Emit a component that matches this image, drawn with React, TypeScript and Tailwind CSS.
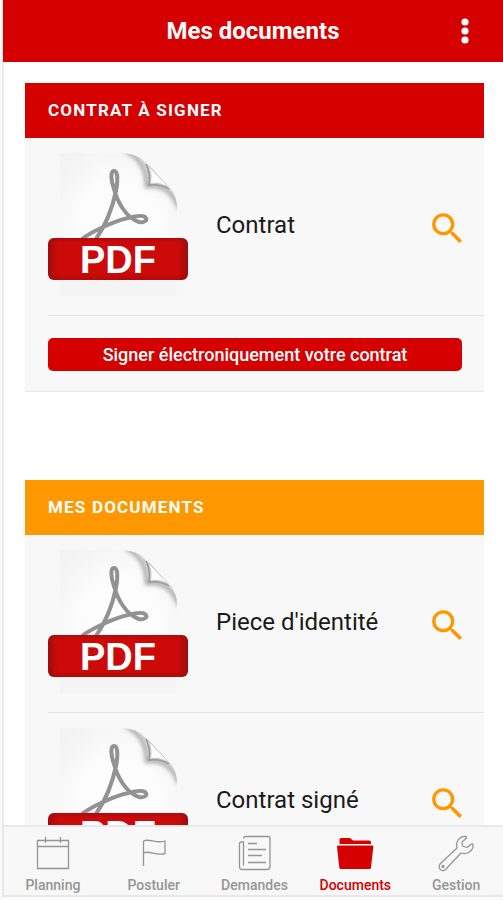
import { useId, type ReactNode } from "react";

function PdfIcon() {
  const id = useId();
  return (
    <svg viewBox="0 0 140 148" className="h-[148px] w-[140px] shrink-0" aria-hidden="true">
      <defs>
        <radialGradient id={`${id}page`} cx="50%" cy="55%" r="65%">
          <stop offset="0" stopColor="#ffffff" />
          <stop offset="0.6" stopColor="#fbfbfb" />
          <stop offset="1" stopColor="#f3f3f3" />
        </radialGradient>
        <linearGradient id={`${id}band`} x1="0" x2="1" y1="0" y2="0">
          <stop offset="0" stopColor="#9c0d0d" />
          <stop offset="0.07" stopColor="#cc0a0a" />
          <stop offset="0.93" stopColor="#cc0a0a" />
          <stop offset="1" stopColor="#9c0d0d" />
        </linearGradient>
        <linearGradient id={`${id}shade`} x1="0" x2="0" y1="0" y2="1">
          <stop offset="0" stopColor="#8a0a0a" stopOpacity="0.4" />
          <stop offset="0.12" stopColor="#8a0a0a" stopOpacity="0" />
          <stop offset="0.85" stopColor="#8a0a0a" stopOpacity="0" />
          <stop offset="1" stopColor="#8a0a0a" stopOpacity="0.4" />
        </linearGradient>
        <filter id={`${id}soft`} x="-30%" y="-30%" width="160%" height="160%">
          <feGaussianBlur stdDeviation="2.2" />
        </filter>
        <clipPath id={`${id}clip`}>
          <path d="M12 3H72C87 3 95 9 102 16L121 36C126 42 129 50 129 57V146H12Z" />
        </clipPath>
      </defs>
      <path
        d="M12 3H72C87 3 95 9 102 16L121 36C126 42 129 50 129 57V146H12Z"
        fill={`url(#${id}page)`}
      />
      <g clipPath={`url(#${id}clip)`}>
        <path
          d="M78 1C93 8 99 20 99 36C115 34 126 43 131 58"
          fill="none"
          stroke="#a0a0a0"
          strokeWidth="4"
          filter={`url(#${id}soft)`}
        />
        <path d="M84 5C96 11 101 22 101 35C113 34 123 38 128 50L119 35L102 16Z" fill="#cccccc" />
        <path d="M101 17C104 23 104 28 103 33C109 32 114 33 119 36Z" fill="#fdfdfd" />
        <path d="M98 14C102 22 102 28 101 35C108 34 115 35 121 39" fill="none" stroke="#999999" strokeWidth="1.5" />
      </g>
      <path
        d="M34 89C43 82 66 71 80 68C87 66 94 65 97 67C101 70 96 73 91 72C78 68 69 51 66 39C63 31 62 21 66 21C70 21 70 31 68 41C64 60 57 76 48 89"
        fill="none"
        stroke="#929292"
        strokeWidth="4"
      />
      <path d="M12 129H129V146H12Z" fill="#f4f4f4" />
      <rect y="88" width="140" height="42" rx="6" fill={`url(#${id}band)`} />
      <rect y="88" width="140" height="42" rx="6" fill={`url(#${id}shade)`} />
      <text x="70" y="123" textAnchor="middle" fill="#ffffff" className="font-['Liberation_Sans',sans-serif] text-[38px] font-bold">
        PDF
      </text>
    </svg>
  );
}

function DocumentRow({ name }: { name: string }) {
  return (
    <li className="ml-[23px] flex h-[178px] items-center border-b border-[#e4e4e4] pr-4">
      <div className="pb-1.5">
        <PdfIcon />
      </div>
      <span className="ml-7 flex-1 pb-1 text-2xl text-[#1a1a1a]">{name}</span>
      <button type="button" aria-label={`Voir ${name}`} className="pt-1 text-[#ff9800]">
        <svg viewBox="0 0 24 24" className="size-[41px]" fill="currentColor" aria-hidden="true">
          <path d="M15.5 14h-.79l-.28-.27A6.471 6.471 0 0 0 16 9.5 6.5 6.5 0 1 0 9.5 16c1.61 0 3.09-.59 4.23-1.57l.27.28v.79l5 4.99L20.49 19l-4.99-5zm-6 0C7.01 14 5 11.99 5 9.5S7.01 5 9.5 5 14 7.01 14 9.5 11.99 14 9.5 14z" />
        </svg>
      </button>
    </li>
  );
}

function NavItem({ label, active = false, children }: { label: string; active?: boolean; children: ReactNode }) {
  return (
    <a
      href="#"
      aria-current={active ? "page" : undefined}
      className={`flex flex-col items-center gap-0.5 pt-2 ${active ? "text-[#d50000]" : "text-[#959595]"}`}
    >
      <svg viewBox="0 0 40 40" className="size-10" fill="none" stroke="currentColor" strokeWidth="1.3" aria-hidden="true">
        {children}
      </svg>
      <span className="text-sm leading-4 font-medium">{label}</span>
    </a>
  );
}

export default function App() {
  return (
    <div className="h-screen bg-[#fafafa] pb-[3px] pl-0.5 font-[Roboto,sans-serif]">
      <div className="flex h-full flex-col bg-white">
        <header className="relative flex h-[62px] shrink-0 items-center justify-center border-l border-[#e8e8e8] bg-[#d50000]">
          <h1 className="text-2xl font-bold text-white">Mes documents</h1>
          <button type="button" aria-label="Menu" className="absolute right-6 flex w-7 justify-center text-white">
            <svg viewBox="0 0 8 28" className="h-7 w-2" fill="currentColor" aria-hidden="true">
              <circle cx="4" cy="5" r="3.6" />
              <circle cx="4" cy="14" r="3.6" />
              <circle cx="4" cy="23" r="3.6" />
            </svg>
          </button>
        </header>

        <main className="flex-1 overflow-y-auto border-l-2 border-[#ebebeb] pt-[21px] pr-[19px] pl-[21px] [scrollbar-width:none]">
          <section className="mb-[88px] border-b border-[#e8e8e8] bg-[#f8f8f8]">
            <h2 className="flex h-[55px] items-center bg-[#d50000] px-[23px] text-[17px] font-bold tracking-[0.07em] text-white">
              CONTRAT À SIGNER
            </h2>
            <ul>
              <DocumentRow name="Contrat" />
            </ul>
            <div className="pt-[22px] pr-[22px] pb-5 pl-[23px]">
              <button type="button" className="h-[33px] w-full rounded-[5px] bg-[#d50000] text-lg font-medium text-white">
                Signer électroniquement votre contrat
              </button>
            </div>
          </section>

          <section className="bg-[#f8f8f8]">
            <h2 className="flex h-[55px] items-center bg-[#ff9800] px-[23px] text-[17px] font-bold tracking-[0.07em] text-white">
              MES DOCUMENTS
            </h2>
            <ul>
              <DocumentRow name="Piece d'identité" />
              <DocumentRow name="Contrat signé" />
            </ul>
          </section>
        </main>

        <nav className="grid h-[72px] shrink-0 grid-cols-5 gap-[7px] border-t-2 border-b-2 border-l-2 border-[#e8e8e8] bg-[#f8f8f8] pl-0.5">
          <NavItem label="Planning">
            <path d="M4.500 5.500H35.500V33.500H4.500ZM4.500 11.500H35.500M12.500 2V8M27.500 2V8" />
          </NavItem>
          <NavItem label="Postuler">
            <path d="M9.500 31V6M9.500 6C15 3 22 9 31 6V18.500C22 21 15 15 9.500 18" />
          </NavItem>
          <NavItem label="Demandes">
            <path d="M9.500 3.500Q9.500 1.500 11.500 1.500H34Q36 1.500 36 3.500V31.500Q36 34.500 33 34.500H8.500Q5.500 34.500 5.500 31.500V9Q5.500 7 7.500 7H9.500V30.500" />
            <path d="M14 8.500H23M14 14.500H32M14 20.500H28M14 27.500H32" strokeWidth="1.6" />
          </NavItem>
          <NavItem label="Documents" active>
            <path
              d="M4.500 9V4.500Q4.500 3 6 3H15L18 5.500H34Q36 5.500 36 7.500V9ZM3 10.500H37.500Q38.500 10.500 38.300 12L36 32.500Q35.800 34 34.500 34H6Q4.500 34 4.300 32.500L2 12Q1.800 10.500 3 10.500Z"
              fill="currentColor"
              stroke="none"
            />
          </NavItem>
          <NavItem label="Gestion">
            <path
              d="M29.500 1.500C24 1 19 6.500 21 13L4.500 28.500C2 31 3 34.500 6 35.500C7.500 36 8.500 35.500 9.500 34.500L25 18C31 20 37.500 16 37 9.500Q36.500 8.500 35.500 9L31 12.500L26.500 11L26 7L30.500 3Q31 2 29.500 1.500Z"
              strokeLinejoin="round"
            />
            <circle cx="7" cy="31.500" r="1" />
          </NavItem>
        </nav>
      </div>
    </div>
  );
}
